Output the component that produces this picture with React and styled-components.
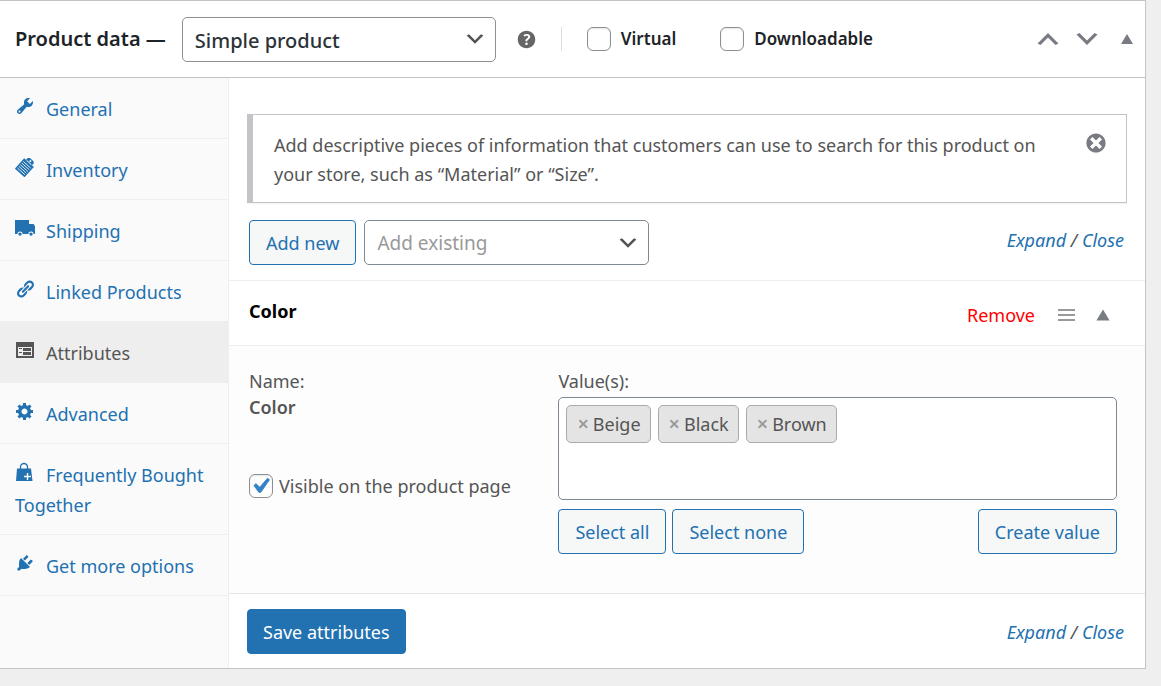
import React, { useState } from 'react';
import styled, { createGlobalStyle, css } from 'styled-components';

const chevron = (color) =>
  `url("data:image/svg+xml,%3Csvg width='20' height='20' viewBox='0 0 20 20' xmlns='http://www.w3.org/2000/svg'%3E%3Cpath d='M5 6l5 5 5-5 2 1-7 7-7-7 2-1z' fill='%23${color}'/%3E%3C/svg%3E")`;

const tick =
  "url(\"data:image/svg+xml,%3Csvg viewBox='0 0 20 20' xmlns='http://www.w3.org/2000/svg'%3E%3Cpath d='M14.33 4.89l1.34.94-5.81 8.38H8.52L5.28 9.67l1.34-1.25 2.57 2.4z' fill='%233582c4' stroke='%233582c4' stroke-width='.6'/%3E%3C/svg%3E\")";

const paths = {
  wrench:
    'M16.68 9.77c-1.34 1.34-3.3 1.67-4.95.99l-5.41 6.52c-.99.99-2.59.99-3.58 0s-.99-2.59 0-3.57l6.52-5.42c-.68-1.65-.35-3.61.99-4.95 1.28-1.28 3.12-1.62 4.72-1.06l-2.89 2.89 2.82 2.82 2.86-2.87c.53 1.58.18 3.39-1.08 4.65zM3.81 16.21c.4.39 1.04.39 1.43 0 .4-.4.4-1.04 0-1.43-.39-.4-1.03-.4-1.43 0-.39.39-.39 1.03 0 1.43z',
  link: 'M17.74 2.76c1.68 1.69 1.68 4.41 0 6.1l-1.53 1.52c-1.12 1.12-2.7 1.47-4.14 1.09l2.62-2.61.76-.77.76-.76c.84-.84.84-2.2 0-3.04-.84-.85-2.2-.85-3.04 0l-.77.76-3.38 3.38c-.37-1.44-.02-3.02 1.1-4.14l1.52-1.53c1.69-1.68 4.42-1.68 6.1 0zM8.59 13.43l5.34-5.34c.42-.42.42-1.1 0-1.52-.44-.43-1.13-.39-1.53 0l-5.33 5.34c-.42.42-.42 1.1 0 1.52.44.43 1.13.39 1.52 0zm-.76 2.29l4.14-4.15c.38 1.44.03 3.02-1.09 4.14l-1.52 1.53c-1.69 1.68-4.41 1.68-6.1 0-1.68-1.68-1.68-4.42 0-6.1l1.53-1.52c1.12-1.12 2.7-1.47 4.14-1.1l-4.14 4.15c-.85.84-.85 2.2 0 3.05.84.84 2.2.84 3.04 0z',
  gear: 'M18 12h-2.18c-.17.7-.44 1.35-.81 1.93l1.54 1.54-2.1 2.1-1.54-1.54c-.58.36-1.23.63-1.91.79V19H8v-2.18c-.68-.16-1.33-.43-1.91-.79l-1.54 1.54-2.12-2.12 1.54-1.54c-.36-.58-.63-1.23-.79-1.91H1V9.03h2.17c.16-.7.44-1.35.8-1.94L2.43 5.55l2.1-2.1 1.54 1.54c.58-.37 1.24-.64 1.93-.81V2h3v2.18c.68.16 1.33.43 1.91.79l1.54-1.54 2.12 2.12-1.54 1.54c.36.59.64 1.24.8 1.94H18V12zm-8.5 1.5c1.66 0 3-1.34 3-3s-1.34-3-3-3-3 1.34-3 3 1.34 3 3 3z',
  plug: 'M13.11 4.36L9.87 7.6 8 5.73l3.24-3.24c.35-.34 1.05-.2 1.56.32.52.51.66 1.21.31 1.55zm-8 1.77l.91-1.12 9.01 9.01-1.19.84c-.71.71-2.63 1.16-3.82 1.16H6.14L4.9 17.26c-.59.59-1.54.59-2.12 0-.59-.58-.59-1.53 0-2.12l1.24-1.24v-3.88c0-1.13.4-3.19 1.09-3.89zm7.26 3.97l3.24-3.24c.34-.35 1.04-.21 1.55.31.52.51.66 1.21.31 1.55l-3.24 3.25z',
  help: 'M17 10c0-3.87-3.14-7-7-7-3.87 0-7 3.13-7 7s3.13 7 7 7c3.86 0 7-3.13 7-7zm-6.3 1.48H9.14v-.43c0-.38.08-.7.24-.98s.46-.57.88-.89c.41-.29.68-.53.81-.71.14-.18.2-.39.2-.62 0-.25-.09-.44-.28-.58-.19-.13-.45-.19-.79-.19-.58 0-1.25.19-2 .57l-.64-1.28c.87-.49 1.8-.74 2.77-.74.81 0 1.45.2 1.92.58.48.39.71.91.71 1.55 0 .43-.09.8-.29 1.11-.19.32-.57.67-1.11 1.06-.38.28-.61.49-.71.63-.1.15-.15.34-.15.57v.35zm-1.47 2.74c-.18-.17-.27-.42-.27-.73 0-.33.08-.58.26-.75s.43-.25.77-.25c.32 0 .57.09.75.26s.27.42.27.74c0 .3-.09.55-.27.72-.18.18-.43.27-.75.27-.33 0-.58-.09-.76-.26z',
  dismiss:
    'M10 2c4.42 0 8 3.58 8 8s-3.58 8-8 8-8-3.58-8-8 3.58-8 8-8zm5 11l-3-3 3-3-2-2-3 3-3-3-2 2 3 3-3 3 2 2 3-3 3 3z',
  truck:
    'M0 2h14v4h4.6L20 8.2V16h-1.4a2.6 2.6 0 0 0-5.2 0H7.6a2.6 2.6 0 0 0-5.2 0H0zM5 14.4a1.7 1.7 0 1 1 0 3.4 1.7 1.7 0 0 1 0-3.4zm11 0a1.7 1.7 0 1 1 0 3.4 1.7 1.7 0 0 1 0-3.4z',
  form: 'M1 2h18v16H1zM3 7v9h14V7zM4 8h3v1H4zm4 0h8v3H8zM4 12h3v1H4zm4 0h8v3H8z',
  up: 'M15 14l-5-5-5 5-2-1 7-7 7 7-2 1z',
  down: 'M5 6l5 5 5-5 2 1-7 7-7-7 2-1z',
  triangle: 'M10 5l6 10H4z',
};

function Icon({ name, size = 20 }) {
  return (
    <svg width={size} height={size} viewBox="0 0 20 20" fill="currentColor" fillRule="evenodd" aria-hidden="true">
      <path d={paths[name]} />
    </svg>
  );
}

function ClipboardIcon() {
  return (
    <svg width="20" height="20" viewBox="0 0 20 20" aria-hidden="true">
      <g transform="rotate(42 10 10)">
        <path d="M3.500 4h13v14h-13z" fill="currentColor" />
        <path d="M6 4V1.500L7.500 0h5L14 1.500V4z" fill="currentColor" />
        <path d="M5 7h10M5 9.200h10M5 11.400h10M5 13.600h10M5 15.800h10" stroke="#fafafa" strokeWidth=".8" />
        <path d="M7 4h6" stroke="#fafafa" strokeWidth=".8" />
        <circle cx="10" cy="2" r="1" fill="#fafafa" />
      </g>
    </svg>
  );
}

function BagIcon() {
  return (
    <svg width="18" height="20" viewBox="0 0 18 20" aria-hidden="true">
      <path d="M5.500 8V5a3.500 3.500 0 0 1 7 0v3" fill="none" stroke="currentColor" strokeWidth="1.300" />
      <path d="M2 6.500h14l1.500 12.500H1z" fill="currentColor" />
      <path d="M12.500 11v7M9 14.500h7" stroke="#fafafa" strokeWidth="1.400" />
    </svg>
  );
}

const tabs = [
  { label: 'General', icon: <Icon name="wrench" /> },
  { label: 'Inventory', icon: <ClipboardIcon /> },
  { label: 'Shipping', icon: <Icon name="truck" /> },
  { label: 'Linked Products', icon: <Icon name="link" /> },
  { label: 'Attributes', icon: <Icon name="form" /> },
  { label: 'Advanced', icon: <Icon name="gear" /> },
  { label: 'Frequently Bought Together', icon: <BagIcon /> },
  { label: 'Get more options', icon: <Icon name="plug" /> },
];

function ExpandClose() {
  return (
    <Toggle>
      <a href="#expand">Expand</a> / <a href="#close">Close</a>
    </Toggle>
  );
}

function App() {
  const [active, setActive] = useState('Attributes');
  const [values, setValues] = useState(['Beige', 'Black', 'Brown']);

  return (
    <>
      <GlobalStyle />
      <Panel>
        <Header>
          <Title htmlFor="product-type">Product data —</Title>
          <Select id="product-type" $strong>
            <option>Simple product</option>
          </Select>
          <Help type="button" aria-label="Help">
            <Icon name="help" size={25} />
          </Help>
          <TypeOptions>
            <TypeLabel>
              <Checkbox type="checkbox" /> Virtual
            </TypeLabel>
            <TypeLabel>
              <Checkbox type="checkbox" /> Downloadable
            </TypeLabel>
          </TypeOptions>
          <Handles>
            <IconButton type="button" aria-label="Move up"><Icon name="up" size={30} /></IconButton>
            <IconButton type="button" aria-label="Move down"><Icon name="down" size={30} /></IconButton>
            <IconButton type="button" aria-label="Toggle panel"><Icon name="triangle" /></IconButton>
          </Handles>
        </Header>

        <Columns>
          <Tabs>
            {tabs.map(({ label, icon }) => (
              <li key={label}>
                <Tab href="#tab" $active={label === active} onClick={() => setActive(label)}>
                  <TabIcon>{icon}</TabIcon>
                  {label}
                </Tab>
              </li>
            ))}
          </Tabs>

          <Content>
            <Notice>
              <p>
                Add descriptive pieces of information that customers can use to search for this product on your
                store, such as “Material” or “Size”.
              </p>
              <IconButton type="button" aria-label="Dismiss"><Icon name="dismiss" size={24} /></IconButton>
            </Notice>

            <Toolbar>
              <Button type="button">Add new</Button>
              <Select aria-label="Add existing">
                <option>Add existing</option>
              </Select>
              <ExpandClose />
            </Toolbar>

            <AttributeHead>
              <h3>Color</h3>
              <Remove href="#remove">Remove</Remove>
              <Drag viewBox="0 0 17 12" aria-hidden="true">
                <path d="M0 1h17M0 6h17M0 11h17" stroke="#999" strokeWidth="2" />
              </Drag>
              <IconButton type="button" aria-label="Toggle attribute"><Icon name="triangle" size={22} /></IconButton>
            </AttributeHead>

            <AttributeBody>
              <NameColumn>
                <span>Name:</span>
                <strong>Color</strong>
                <VisibleLabel>
                  <Checkbox type="checkbox" defaultChecked />
                  Visible on the product page
                </VisibleLabel>
              </NameColumn>
              <div>
                <label htmlFor="values">Value(s):</label>
                <ValueBox>
                  {values.map((value) => (
                    <Chip key={value}>
                      <button
                        type="button"
                        aria-label={`Remove ${value}`}
                        onClick={() => setValues(values.filter((v) => v !== value))}
                      >
                        ×
                      </button>
                      {value}
                    </Chip>
                  ))}
                  <input id="values" type="text" />
                </ValueBox>
                <ValueButtons>
                  <Button type="button">Select all</Button>
                  <Button type="button">Select none</Button>
                  <Button type="button">Create value</Button>
                </ValueButtons>
              </div>
            </AttributeBody>

            <Footer>
              <Button type="button" $primary>Save attributes</Button>
              <ExpandClose />
            </Footer>
          </Content>
        </Columns>
      </Panel>
    </>
  );
}

export default App;

const GlobalStyle = createGlobalStyle`
  * {
    box-sizing: border-box;
  }

  body {
    margin: 0;
    background: #efefef;
    color: #555;
    font: 18px/26px "Noto Sans", "Open Sans", sans-serif;
  }

  button, input, select {
    font: inherit;
  }

  a {
    color: #2271b1;
    text-decoration: none;
  }

  p, h3, ul {
    margin: 0;
    padding: 0;
  }

  svg {
    display: block;
  }
`;

const Panel = styled.section`
  margin-right: 15px;
  background: #fff;
  border: 1px solid #c3c4c7;
  border-left: 0;
  box-shadow: 0 1px 1px rgba(0, 0, 0, 0.04);
`;

const Header = styled.header`
  display: flex;
  align-items: center;
  height: 77px;
  padding: 0 8px 0 15px;
  border-bottom: 1px solid #c3c4c7;
  color: #1d2327;
`;

const Title = styled.label`
  margin-right: 16px;
  font-size: 20px;
  font-weight: 600;
`;

const Select = styled.select`
  appearance: none;
  width: ${(p) => (p.$strong ? '314px' : '285px')};
  height: 45px;
  padding: ${(p) => (p.$strong ? '3px' : '0')} 36px 0 12px;
  border: 1px solid ${(p) => (p.$strong ? '#8c8f94' : '#7e8993')};
  border-radius: 5px;
  background: #fff ${chevron('555')} no-repeat right 8px center / 24px;
  color: ${(p) => (p.$strong ? '#2c3338' : '#999')};
  font-size: ${(p) => (p.$strong ? '20px' : '19px')};
  font-weight: ${(p) => (p.$strong ? 500 : 400)};
`;

const IconButton = styled.button`
  padding: 0;
  border: 0;
  background: none;
  color: #787c82;
  cursor: pointer;
`;

const Help = styled(IconButton)`
  margin: 0 22px 0 18px;
  color: #666;
`;

const TypeOptions = styled.div`
  display: flex;
  gap: 44px;
  padding-left: 25px;
  border-left: 1px solid #ddd;
`;

const TypeLabel = styled.label`
  display: flex;
  align-items: center;
  gap: 10px;
  font-size: 17px;
  line-height: 24px;
  font-weight: 600;
`;

const Checkbox = styled.input`
  appearance: none;
  flex: none;
  width: 24px;
  height: 24px;
  margin: 0;
  border: 1px solid #8c8f94;
  border-radius: 6px;
  background: #fff;
  box-shadow: inset 0 1px 2px rgba(0, 0, 0, 0.1);

  &:checked {
    background: #fff ${tick} center / 30px;
  }
`;

const Handles = styled.div`
  display: flex;
  align-items: center;
  gap: 9px;
  margin-left: auto;

  button:last-child {
    margin-left: 6px;
  }
`;

const Columns = styled.div`
  display: grid;
  grid-template-columns: 1fr 4fr;
`;

const Tabs = styled.ul`
  list-style: none;
  background: #fafafa;
  border-right: 1px solid #eee;
`;

const Tab = styled.a`
  display: block;
  padding: 16px 15px 14px;
  border-bottom: 1px solid #eee;
  line-height: 30px;

  ${(p) =>
    p.$active &&
    css`
      background: #eee;
      color: #555;
    `}
`;

const TabIcon = styled.span`
  display: inline-block;
  width: 20px;
  height: 20px;
  margin-right: 11px;
  vertical-align: 0;
`;

const Content = styled.main`
  padding-top: 36px;
`;

const Notice = styled.div`
  display: flex;
  align-items: flex-start;
  justify-content: space-between;
  gap: 24px;
  margin: 0 18px 17px;
  padding: 16px 18px 13px 21px;
  border: 1px solid #c3c4c7;
  border-left-width: 6px;
  box-shadow: 0 1px 1px rgba(0, 0, 0, 0.04);

  p {
    line-height: 29px;
  }
`;

const Toolbar = styled.div`
  display: flex;
  gap: 8px;
  padding: 0 21px 15px 20px;
  border-bottom: 1px solid #eee;
`;

const Button = styled.button`
  height: 45px;
  padding: 0 ${(p) => (p.$primary ? '15px' : '16px')};
  border: 1px solid #2271b1;
  border-radius: 4px;
  background: ${(p) => (p.$primary ? '#2271b1' : '#f6f7f7')};
  color: ${(p) => (p.$primary ? '#fff' : '#2271b1')};
  white-space: nowrap;
  cursor: pointer;
`;

const Toggle = styled.span`
  margin-left: auto;
  font-size: 18px;
  line-height: 40px;
  font-style: italic;
`;

const AttributeHead = styled.div`
  display: flex;
  align-items: center;
  height: 65px;
  padding: 4px 31px 0 20px;
  border-bottom: 1px solid #eee;

  h3 {
    flex: 1;
    padding-bottom: 8px;
    color: #000;
    font-size: 18px;
    font-weight: 700;
  }
`;

const Remove = styled.a`
  color: #f00;
`;

const Drag = styled.svg`
  width: 17px;
  height: 12px;
  margin: 0 17px 0 23px;
`;

const AttributeBody = styled.div`
  display: grid;
  grid-template-columns: 36fr 65fr;
  padding: 22px 28px 39px 20px;
  border-bottom: 1px solid #e5e5e5;
  background: #fdfdfd;

  label {
    display: block;
  }
`;

const NameColumn = styled.div`
  display: flex;
  flex-direction: column;

  strong {
    font-weight: 600;
  }

  && label {
    display: flex;
  }
`;

const VisibleLabel = styled.label`
  align-items: center;
  gap: 6px;
  margin-top: 53px;
`;

const ValueBox = styled.div`
  display: flex;
  flex-wrap: wrap;
  align-content: flex-start;
  gap: 7px;
  min-height: 103px;
  margin: 3px 0 9px;
  padding: 7px;
  border: 1px solid #7e8993;
  border-radius: 5px;
  background: #fff;

  input {
    flex: 1;
    width: 40px;
    min-width: 0;
    padding: 0;
    border: 0;
    outline: 0;
    background: none;
  }
`;

const Chip = styled.span`
  display: flex;
  align-items: center;
  height: 38px;
  padding: 0 9px 0 10px;
  border: 1px solid #aaa;
  border-radius: 5px;
  background: #e4e4e4;

  button {
    margin-right: 4px;
    padding: 0;
    border: 0;
    background: none;
    color: #999;
    font-size: 20px;
    font-weight: 600;
  }
`;

const ValueButtons = styled.div`
  display: flex;
  gap: 6px;

  button:last-child {
    margin-left: auto;
  }
`;

const Footer = styled.footer`
  display: flex;
  align-items: center;
  padding: 15px 21px 14px 18px;
`;
